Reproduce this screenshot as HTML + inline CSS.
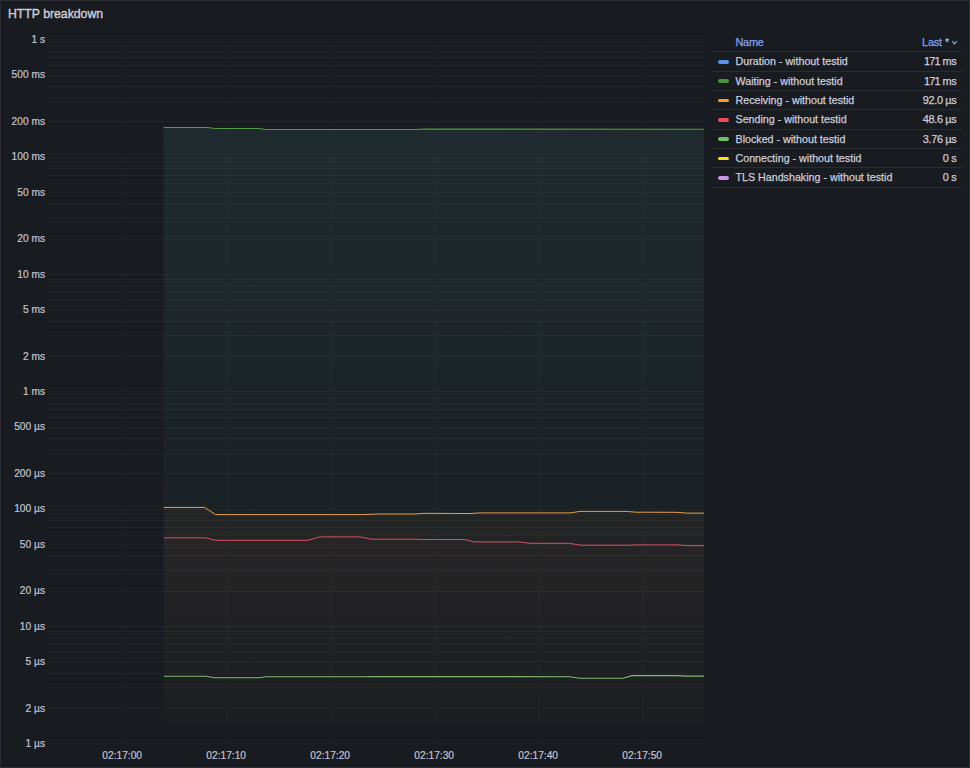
<!DOCTYPE html>
<html><head><meta charset="utf-8"><style>
html,body{margin:0;padding:0;width:970px;height:768px;overflow:hidden;background:#181b1f}
body{position:relative;font-family:"Liberation Sans",sans-serif;color:#ccccdc}
.row,.hdr{-webkit-text-stroke:0.25px currentColor}
.title{-webkit-text-stroke:0.4px currentColor}
.frame{position:absolute;left:0;top:0;width:968px;height:766px;border:1px solid #2c2e33}
.title{position:absolute;left:8px;top:6px;font-size:12.25px;line-height:16px;color:#ccccdc;white-space:nowrap}
.leg{position:absolute;left:0;top:0}
.hdr{position:absolute;top:35px;font-size:10.9px;line-height:14px;color:#84a2ee}
.sep{position:absolute;left:712px;width:250px;height:1px;background:#2a2c31}
.row{position:absolute;left:0;width:970px;height:19px;font-size:10.9px;line-height:19px}
.row .n{font-size:10.7px}
.row i{position:absolute;left:717.5px;top:8.2px;width:11.6px;height:3.6px;border-radius:2px}
.row .n{position:absolute;left:735.5px;top:0.4px;white-space:nowrap}
.row .v{position:absolute;right:13.700000000000045px;top:0.4px;white-space:nowrap;letter-spacing:-0.35px}
</style></head><body>
<div class="frame"></div>
<svg width="970" height="768" viewBox="0 0 970 768" style="position:absolute;left:0;top:0">
<defs>
<linearGradient id="gDur" x1="0" y1="127.4" x2="0" y2="743.7" gradientUnits="userSpaceOnUse"><stop offset="0" stop-color="#5794F2" stop-opacity="0.068"/><stop offset="1" stop-color="#5794F2" stop-opacity="0"/></linearGradient>
<linearGradient id="gWait" x1="0" y1="127.4" x2="0" y2="743.7" gradientUnits="userSpaceOnUse"><stop offset="0" stop-color="#46953C" stop-opacity="0.066"/><stop offset="1" stop-color="#46953C" stop-opacity="0"/></linearGradient>
<linearGradient id="gRecv" x1="0" y1="39.7" x2="0" y2="743.7" gradientUnits="userSpaceOnUse"><stop offset="0" stop-color="#FF9830" stop-opacity="0.11"/><stop offset="1" stop-color="#FF9830" stop-opacity="0"/></linearGradient>
<linearGradient id="gSend" x1="0" y1="39.7" x2="0" y2="743.7" gradientUnits="userSpaceOnUse"><stop offset="0" stop-color="#F2495C" stop-opacity="0.085"/><stop offset="1" stop-color="#F2495C" stop-opacity="0"/></linearGradient>
<linearGradient id="gBlk" x1="0" y1="39.7" x2="0" y2="743.7" gradientUnits="userSpaceOnUse"><stop offset="0" stop-color="#73BF69" stop-opacity="0.12"/><stop offset="1" stop-color="#73BF69" stop-opacity="0"/></linearGradient>
</defs>
<g stroke="rgba(240,250,255,0.035)" stroke-width="1" shape-rendering="crispEdges"><line x1="48" x2="704" y1="743.70" y2="743.70"/><line x1="48" x2="704" y1="708.38" y2="708.38"/><line x1="48" x2="704" y1="687.72" y2="687.72"/><line x1="48" x2="704" y1="673.06" y2="673.06"/><line x1="48" x2="704" y1="661.69" y2="661.69"/><line x1="48" x2="704" y1="652.40" y2="652.40"/><line x1="48" x2="704" y1="644.54" y2="644.54"/><line x1="48" x2="704" y1="637.74" y2="637.74"/><line x1="48" x2="704" y1="631.74" y2="631.74"/><line x1="48" x2="704" y1="626.37" y2="626.37"/><line x1="48" x2="704" y1="591.05" y2="591.05"/><line x1="48" x2="704" y1="570.38" y2="570.38"/><line x1="48" x2="704" y1="555.72" y2="555.72"/><line x1="48" x2="704" y1="544.35" y2="544.35"/><line x1="48" x2="704" y1="535.06" y2="535.06"/><line x1="48" x2="704" y1="527.21" y2="527.21"/><line x1="48" x2="704" y1="520.40" y2="520.40"/><line x1="48" x2="704" y1="514.40" y2="514.40"/><line x1="48" x2="704" y1="509.03" y2="509.03"/><line x1="48" x2="704" y1="473.71" y2="473.71"/><line x1="48" x2="704" y1="453.05" y2="453.05"/><line x1="48" x2="704" y1="438.39" y2="438.39"/><line x1="48" x2="704" y1="427.02" y2="427.02"/><line x1="48" x2="704" y1="417.73" y2="417.73"/><line x1="48" x2="704" y1="409.88" y2="409.88"/><line x1="48" x2="704" y1="403.07" y2="403.07"/><line x1="48" x2="704" y1="397.07" y2="397.07"/><line x1="48" x2="704" y1="391.70" y2="391.70"/><line x1="48" x2="704" y1="356.38" y2="356.38"/><line x1="48" x2="704" y1="335.72" y2="335.72"/><line x1="48" x2="704" y1="321.06" y2="321.06"/><line x1="48" x2="704" y1="309.69" y2="309.69"/><line x1="48" x2="704" y1="300.40" y2="300.40"/><line x1="48" x2="704" y1="292.54" y2="292.54"/><line x1="48" x2="704" y1="285.74" y2="285.74"/><line x1="48" x2="704" y1="279.74" y2="279.74"/><line x1="48" x2="704" y1="274.37" y2="274.37"/><line x1="48" x2="704" y1="239.05" y2="239.05"/><line x1="48" x2="704" y1="218.38" y2="218.38"/><line x1="48" x2="704" y1="203.72" y2="203.72"/><line x1="48" x2="704" y1="192.35" y2="192.35"/><line x1="48" x2="704" y1="183.06" y2="183.06"/><line x1="48" x2="704" y1="175.21" y2="175.21"/><line x1="48" x2="704" y1="168.40" y2="168.40"/><line x1="48" x2="704" y1="162.40" y2="162.40"/><line x1="48" x2="704" y1="157.03" y2="157.03"/><line x1="48" x2="704" y1="121.71" y2="121.71"/><line x1="48" x2="704" y1="101.05" y2="101.05"/><line x1="48" x2="704" y1="86.39" y2="86.39"/><line x1="48" x2="704" y1="75.02" y2="75.02"/><line x1="48" x2="704" y1="65.73" y2="65.73"/><line x1="48" x2="704" y1="57.88" y2="57.88"/><line x1="48" x2="704" y1="51.07" y2="51.07"/><line x1="48" x2="704" y1="45.07" y2="45.07"/><line x1="48" x2="704" y1="39.70" y2="39.70"/><line x1="122.20" x2="122.20" y1="39.7" y2="743.7"/><line x1="226.20" x2="226.20" y1="39.7" y2="743.7"/><line x1="330.20" x2="330.20" y1="39.7" y2="743.7"/><line x1="434.20" x2="434.20" y1="39.7" y2="743.7"/><line x1="538.20" x2="538.20" y1="39.7" y2="743.7"/><line x1="642.20" x2="642.20" y1="39.7" y2="743.7"/></g>
<path d="M163.5,127.4 L207.7,127.4 L214.9,128.5 L258.9,128.5 L266.1,129.4 L416.0,129.4 L424.0,129.1 L704.0,129.2 L704.0,743.7 L163.5,743.7 Z" fill="url(#gDur)"/>
<path d="M163.5,127.4 L207.7,127.4 L214.9,128.5 L258.9,128.5 L266.1,129.4 L416.0,129.4 L424.0,129.1 L704.0,129.2 L704.0,743.7 L163.5,743.7 Z" fill="url(#gWait)"/>
<path d="M163.7,507.4 L204.5,507.4 L215.6,514.6 L363.0,514.6 L377.0,514.0 L415.0,514.0 L425.0,513.3 L470.0,513.5 L480.0,512.9 L570.0,512.9 L580.0,511.4 L626.0,511.4 L636.0,512.2 L677.0,512.3 L687.0,513.1 L704.0,513.1 L704.0,743.7 L163.7,743.7 Z" fill="url(#gRecv)"/>
<path d="M163.7,537.8 L205.5,537.8 L215.6,540.3 L308.0,540.3 L319.7,536.9 L360.0,536.9 L371.7,539.2 L415.0,539.2 L425.0,539.5 L464.8,539.5 L474.0,541.9 L518.7,541.9 L530.0,543.3 L569.5,543.3 L580.0,545.2 L629.0,545.2 L639.0,544.9 L677.0,544.9 L687.0,545.7 L704.0,545.7 L704.0,743.7 L163.7,743.7 Z" fill="url(#gSend)"/>
<path d="M163.7,676.2 L206.2,676.2 L214.1,677.8 L259.6,677.8 L265.3,676.8 L363.0,676.8 L373.0,676.6 L569.5,676.7 L580.0,678.2 L623.0,678.2 L632.0,675.6 L677.0,675.6 L687.0,676.1 L704.0,676.1 L704.0,743.7 L163.7,743.7 Z" fill="url(#gBlk)"/>
<g fill="none" stroke-width="1" stroke-linejoin="round">
<path d="M163.5,127.4 L207.7,127.4 L214.9,128.5 L258.9,128.5 L266.1,129.4 L416.0,129.4 L424.0,129.1 L704.0,129.2" stroke="#4f9a46" stroke-width="1.05"/>
<path d="M163.7,507.4 L204.5,507.4 L215.6,514.6 L363.0,514.6 L377.0,514.0 L415.0,514.0 L425.0,513.3 L470.0,513.5 L480.0,512.9 L570.0,512.9 L580.0,511.4 L626.0,511.4 L636.0,512.2 L677.0,512.3 L687.0,513.1 L704.0,513.1" stroke="#e3a04f"/>
<path d="M163.7,537.8 L205.5,537.8 L215.6,540.3 L308.0,540.3 L319.7,536.9 L360.0,536.9 L371.7,539.2 L415.0,539.2 L425.0,539.5 L464.8,539.5 L474.0,541.9 L518.7,541.9 L530.0,543.3 L569.5,543.3 L580.0,545.2 L629.0,545.2 L639.0,544.9 L677.0,544.9 L687.0,545.7 L704.0,545.7" stroke="#d94f66"/>
<path d="M163.7,676.2 L206.2,676.2 L214.1,677.8 L259.6,677.8 L265.3,676.8 L363.0,676.8 L373.0,676.6 L569.5,676.7 L580.0,678.2 L623.0,678.2 L632.0,675.6 L677.0,675.6 L687.0,676.1 L704.0,676.1" stroke="#80ba72" stroke-width="1.1"/>
</g>
<g fill="#c4c4d0" stroke="#c4c4d0" stroke-width="0.2" font-family="Liberation Sans, sans-serif" font-size="10.2px"><text x="45" y="43.10" text-anchor="end">1 s</text><text x="45" y="78.42" text-anchor="end">500 ms</text><text x="45" y="125.11" text-anchor="end">200 ms</text><text x="45" y="160.43" text-anchor="end">100 ms</text><text x="45" y="195.75" text-anchor="end">50 ms</text><text x="45" y="242.45" text-anchor="end">20 ms</text><text x="45" y="277.77" text-anchor="end">10 ms</text><text x="45" y="313.09" text-anchor="end">5 ms</text><text x="45" y="359.78" text-anchor="end">2 ms</text><text x="45" y="395.10" text-anchor="end">1 ms</text><text x="45" y="430.42" text-anchor="end">500 µs</text><text x="45" y="477.11" text-anchor="end">200 µs</text><text x="45" y="512.43" text-anchor="end">100 µs</text><text x="45" y="547.75" text-anchor="end">50 µs</text><text x="45" y="594.45" text-anchor="end">20 µs</text><text x="45" y="629.77" text-anchor="end">10 µs</text><text x="45" y="665.09" text-anchor="end">5 µs</text><text x="45" y="711.78" text-anchor="end">2 µs</text><text x="45" y="747.10" text-anchor="end">1 µs</text><text x="122.20" y="759" text-anchor="middle">02:17:00</text><text x="226.20" y="759" text-anchor="middle">02:17:10</text><text x="330.20" y="759" text-anchor="middle">02:17:20</text><text x="434.20" y="759" text-anchor="middle">02:17:30</text><text x="538.20" y="759" text-anchor="middle">02:17:40</text><text x="642.20" y="759" text-anchor="middle">02:17:50</text></g>
</svg>
<div class="title">HTTP breakdown</div>
<div class="hdr" style="left:735.5px;letter-spacing:-0.25px">Name</div>
<div class="hdr" style="left:922px;letter-spacing:-0.15px">Last</div>
<svg style="position:absolute;left:0;top:0" width="970" height="60"><path d="M947.2,38.2 V42.2 M945.4,39.2 L949,41.2 M945.4,41.2 L949,39.2" stroke="#84a2ee" stroke-width="1.1"/><path d="M952.6,41.6 L954.5,43.9 L956.5,41.6" fill="none" stroke="#84a2ee" stroke-width="1.3" stroke-linecap="round" stroke-linejoin="round"/></svg>
<div class="sep" style="top:51.30px"></div><div class="sep" style="top:70.65px"></div><div class="sep" style="top:90.00px"></div><div class="sep" style="top:109.35px"></div><div class="sep" style="top:128.70px"></div><div class="sep" style="top:148.05px"></div><div class="sep" style="top:167.40px"></div><div class="sep" style="top:186.75px"></div>
<div class="row" style="top:51.80px"><i style="background:#5794F2"></i><span class="n">Duration - without testid</span><span class="v"><b style="font-weight:normal;letter-spacing:-0.75px">171</b> ms</span></div><div class="row" style="top:71.15px"><i style="background:#46953C"></i><span class="n">Waiting - without testid</span><span class="v"><b style="font-weight:normal;letter-spacing:-0.75px">171</b> ms</span></div><div class="row" style="top:90.50px"><i style="background:#FF9830"></i><span class="n">Receiving - without testid</span><span class="v">92.0 µs</span></div><div class="row" style="top:109.85px"><i style="background:#F2495C"></i><span class="n">Sending - without testid</span><span class="v">48.6 µs</span></div><div class="row" style="top:129.20px"><i style="background:#73BF69"></i><span class="n">Blocked - without testid</span><span class="v">3.76 µs</span></div><div class="row" style="top:148.55px"><i style="background:#FADE2A"></i><span class="n">Connecting - without testid</span><span class="v">0 s</span></div><div class="row" style="top:167.90px"><i style="background:#CA95E5"></i><span class="n">TLS Handshaking - without testid</span><span class="v">0 s</span></div>
</body></html>
